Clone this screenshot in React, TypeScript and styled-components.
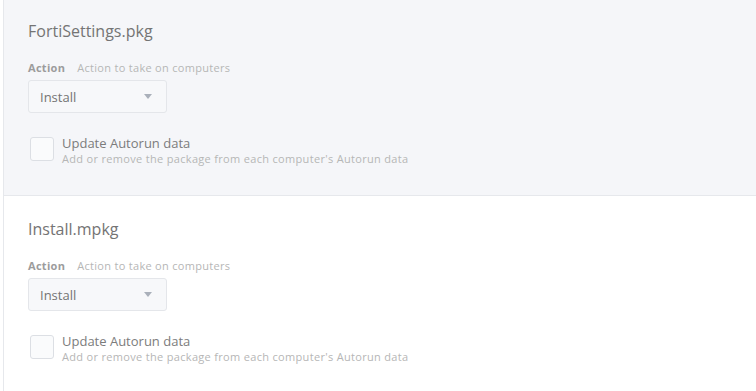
import React from "react";
import styled, { createGlobalStyle } from "styled-components";

const Global = createGlobalStyle`
  html, body { margin: 0; padding: 0; background: #ffffff; }
  body { font-family: "Open Sans", "Lato", sans-serif; -webkit-font-smoothing: antialiased; }
`;

const Page = styled.div`
  margin-left: 3px;
  border-left: 1px solid #e6e8ec;
  min-height: 391px;
`;

const Section = styled.section<{ $shaded?: boolean }>`
  background: ${(p) => (p.$shaded ? "#f5f6f9" : "#ffffff")};
  border-bottom: 1px solid ${(p) => (p.$shaded ? "#e6e8ec" : "transparent")};
  padding: ${(p) => (p.$shaded ? "20px" : "22px")} 24px 29px 24px;
  display: flex;
  flex-direction: column;
`;

const Title = styled.h2`
  margin: 0;
  font-size: 16px;
  line-height: 22px;
  font-weight: 400;
  color: #747474;
`;

const LabelRow = styled.div`
  margin-top: 19px;
  display: flex;
  align-items: baseline;
  gap: 12px;
  font-size: 11px;
  line-height: 14px;
  letter-spacing: 0.3px;
`;

const LabelName = styled.span`
  font-weight: 700;
  color: #9c9c9c;
`;

const LabelHint = styled.span`
  color: #b6b6b6;
`;

const Select = styled.div`
  margin-top: 5px;
  height: 31px;
  box-sizing: content-box;
  border: 1px solid #e4e6ea;
  border-radius: 3px;
  background: #f7f8fa;
  display: flex;
  align-items: center;
  justify-content: space-between;
  padding: 0 14px 0 11px;
  width: 112px;
  font-size: 13px;
  color: #747474;
`;

const Caret = styled.span`
  width: 0;
  height: 0;
  border-left: 4px solid transparent;
  border-right: 4px solid transparent;
  border-top: 5px solid #aab0ba;
`;

const CheckRow = styled.div`
  margin-top: 24px;
  display: flex;
  align-items: flex-start;
  gap: 8px;
  padding-left: 2px;
`;

const Box = styled.span`
  width: 22px;
  height: 22px;
  border: 1px solid #dcdfe4;
  border-radius: 3px;
  background: #fafbfc;
  flex: none;
`;

const CheckText = styled.div`
  display: flex;
  flex-direction: column;
  margin-top: -2px;
`;

const CheckTitle = styled.span`
  font-size: 13px;
  line-height: 17px;
  color: #7c7c7c;
`;

const CheckHint = styled.span`
  font-size: 11px;
  line-height: 14px;
  letter-spacing: 0.32px;
  color: #b6b6b6;
`;

const packages = [
  { name: "FortiSettings.pkg", shaded: true },
  { name: "Install.mpkg", shaded: false },
];

export default function App() {
  return (
    <>
      <Global />
      <Page>
        {packages.map((p) => (
          <Section key={p.name} $shaded={p.shaded}>
            <Title>{p.name}</Title>
            <LabelRow>
              <LabelName>Action</LabelName>
              <LabelHint>Action to take on computers</LabelHint>
            </LabelRow>
            <Select>
              <span>Install</span>
              <Caret />
            </Select>
            <CheckRow>
              <Box />
              <CheckText>
                <CheckTitle>Update Autorun data</CheckTitle>
                <CheckHint>Add or remove the package from each computer's Autorun data</CheckHint>
              </CheckText>
            </CheckRow>
          </Section>
        ))}
      </Page>
    </>
  );
}
